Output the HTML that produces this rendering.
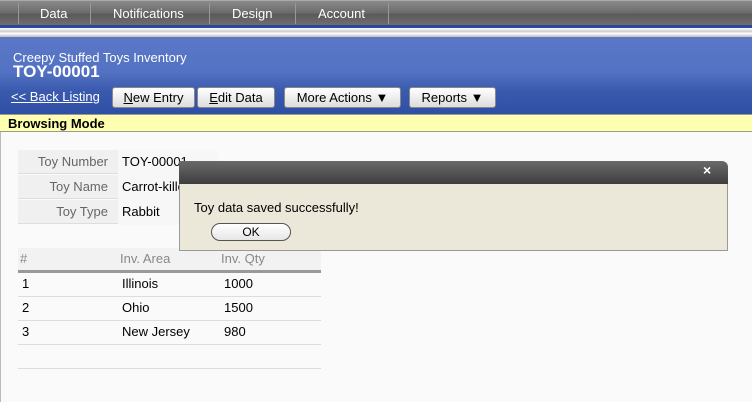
<!DOCTYPE html>
<html><head><style>
body{margin:0;width:752px;height:402px;overflow:hidden;background:#fafafa;font-family:"Lucida Grande","Liberation Sans",sans-serif;font-size:13px;position:relative}
.a{position:absolute}
.nav{left:0;top:0;width:752px;height:25px;background:linear-gradient(#8a8a8a,#6a6a6a 50%,#5a5a5a 55%,#6e6e6e);border-top:1px solid #aaa;box-sizing:border-box}
.nav span{position:absolute;top:5px;color:#fff;font-size:13px}
.sep{position:absolute;top:2px;width:1px;height:21px;background:#999}
.hdr{left:0;top:37px;width:752px;height:77px;background:linear-gradient(#5a78c6,#5472c3 45%,#3a5aae 70%,#2f4fa6)}
.btn{position:absolute;top:87px;height:21px;background:linear-gradient(#fff,#ddd);border:1px solid #888;border-radius:3px;box-sizing:border-box;font-size:13px;text-align:center;line-height:20px;color:#000}
.lab{position:absolute;left:18px;width:100px;height:24px;background:#f0f0f0;border-bottom:1px solid #ddd;text-align:right;box-sizing:border-box;padding-right:10px;line-height:24px;color:#666}
.val{position:absolute;left:118px;line-height:24px;padding-left:4px;color:#000}
.row{position:absolute;left:18px;width:303px;height:24px;border-bottom:1px solid #ddd;line-height:24px}
.row span{position:absolute}
</style></head><body>
<div class="a nav">
<div class="sep" style="left:18px"></div><span style="left:40px">Data</span>
<div class="sep" style="left:90px"></div><span style="left:113px">Notifications</span>
<div class="sep" style="left:209px"></div><span style="left:232px">Design</span>
<div class="sep" style="left:295px"></div><span style="left:318px">Account</span>
<div class="sep" style="left:388px"></div>
</div>
<div class="a" style="left:0;top:25px;width:752px;height:3px;background:#2b48a0"></div>
<div class="a" style="left:0;top:28px;width:752px;height:9px;background:linear-gradient(#fff,#ccc 40%,#fff 60%,#bbb)"></div>
<div class="a hdr"></div>
<div class="a" style="left:13px;top:50px;color:#fff;font-size:13px">Creepy Stuffed Toys Inventory</div>
<div class="a" style="left:13px;top:62px;color:#fff;font-size:17px;font-weight:bold">TOY-00001</div>
<div class="a" style="left:11px;top:89px;color:#fff;text-decoration:underline">&lt;&lt; Back Listing</div>
<div class="btn" style="left:112px;width:83px"><u>N</u>ew Entry</div>
<div class="btn" style="left:197px;width:78px"><u>E</u>dit Data</div>
<div class="btn" style="left:284px;width:117px">More Actions ▼</div>
<div class="btn" style="left:409px;width:87px">Reports ▼</div>
<div class="a" style="left:0;top:114px;width:752px;height:18px;background:#ffffb0;border-top:1px solid #999;border-bottom:1px solid #999;box-sizing:border-box"></div>
<div class="a" style="left:8px;top:116px;font-weight:bold;font-size:13px">Browsing Mode</div>
<div class="a" style="left:0;top:132px;width:1px;height:270px;background:#bbb"></div>
<div class="a" style="left:118px;top:150px;width:100px;height:75px;background:#f7f7f7"></div>
<div class="lab" style="top:150px">Toy Number</div><div class="val" style="top:150px">TOY-00001</div>
<div class="lab" style="top:175px">Toy Name</div><div class="val" style="top:175px">Carrot-killed Rabbit</div>
<div class="lab" style="top:200px">Toy Type</div><div class="val" style="top:200px">Rabbit</div>
<div class="a" style="left:18px;top:248px;width:303px;height:22px;background:#f2f2f2;border-bottom:3px solid #999;color:#888;line-height:22px"><span class="a" style="left:2px">#</span><span class="a" style="left:102px">Inv. Area</span><span class="a" style="left:203px">Inv. Qty</span></div>
<div class="row" style="top:272px"><span style="left:4px">1</span><span style="left:104px">Illinois</span><span style="left:206px">1000</span></div>
<div class="row" style="top:296px"><span style="left:4px">2</span><span style="left:104px">Ohio</span><span style="left:206px">1500</span></div>
<div class="row" style="top:320px"><span style="left:4px">3</span><span style="left:104px">New Jersey</span><span style="left:206px">980</span></div>
<div class="row" style="top:344px"></div>
<div class="a" style="left:179px;top:161px;width:549px;height:23px;background:linear-gradient(#6a6a6a,#3e3e3e);border-radius:0 6px 0 0"></div>
<div class="a" style="left:703px;top:162px;color:#fff;font-weight:bold;font-size:14px">×</div>
<div class="a" style="left:179px;top:184px;width:549px;height:67px;background:#ebe8da;border:1px solid #999;border-top:none;box-sizing:border-box"></div>
<div class="a" style="left:194px;top:200px;font-size:13px">Toy data saved successfully!</div>
<div class="a" style="left:211px;top:223px;width:80px;height:18px;border:1px solid #555;border-radius:9px;background:linear-gradient(#fff,#e6e6e6);box-sizing:border-box;text-align:center;font-size:12px;line-height:16px">OK</div>
</body></html>
